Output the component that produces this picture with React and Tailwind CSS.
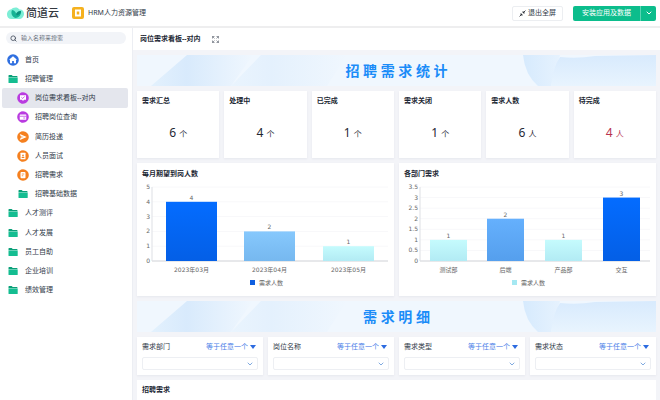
import React from "react";
import { ChevronDown, Search } from "lucide-react";

const DEJAVU = "'DejaVu Sans', 'Noto Sans CJK SC', sans-serif";

function Folder() {
  return (
    <svg viewBox="0 0 12 12" className="size-3" aria-hidden="true">
      <path d="M1.5 2.600q0-.6.6-.6h2.600l1 1.100h4.200q.6 0 .6.6v.6h-9z" fill="#0a9f78" />
      <path d="M1.500 4.600h9.200v4.800q0 .6-.6.6h-8q-.6 0-.6-.6z" fill="#14bd91" />
    </svg>
  );
}

function Disc({ color, children }) {
  return (
    <svg viewBox="0 0 24 24" className="size-3" aria-hidden="true">
      <circle cx="12" cy="12" r="11.6" fill={color} />
      {children}
    </svg>
  );
}

const icons = {
  home: (
    <Disc color="#2f6fe0">
      <path d="M12 4.500l8 7.200h-2V18.500h-4.200v-4.500h-3.600v4.500H6v-6.800H4z" fill="#fff" />
    </Disc>
  ),
  board: (
    <Disc color="#b93be0">
      <path d="M6 6.500h12v9h-4L12 18l-2-2.500H6z" fill="#fff" />
      <path d="M8.800 10.500l2.600 2.500 4-4.200" fill="none" stroke="#b93be0" strokeWidth="1.600" />
    </Disc>
  ),
  query: (
    <Disc color="#b93be0">
      <rect x="5.500" y="7" width="13" height="10.500" rx="1" fill="#fff" />
      <path d="M5.500 10.500h13M12.500 14h4" stroke="#b93be0" strokeWidth="1.500" />
    </Disc>
  ),
  send: (
    <Disc color="#f5801f">
      <path d="M5.500 6l14 6-14 6 2.200-5 6-1-6-1z" fill="#fff" />
    </Disc>
  ),
  badge: (
    <Disc color="#f5801f">
      <rect x="7" y="5.500" width="10" height="13" rx="1" fill="#fff" />
      <circle cx="12" cy="10.500" r="1.700" fill="#f5801f" />
      <path d="M9 16q0-3 3-3t3 3z" fill="#f5801f" />
    </Disc>
  ),
  clip: (
    <Disc color="#f5801f">
      <rect x="7" y="6" width="10" height="12.500" rx="2" fill="#fff" />
      <path d="M9.500 10h5M9.500 13.500h3" stroke="#f5801f" strokeWidth="1.500" />
    </Disc>
  ),
  folder: <Folder />,
};

const menu = [
  { label: "首页", icon: "home" },
  { label: "招聘管理", icon: "folder" },
  { label: "岗位需求看板--对内", icon: "board", child: true, active: true },
  { label: "招聘岗位查询", icon: "query", child: true },
  { label: "简历投递", icon: "send", child: true },
  { label: "人员面试", icon: "badge", child: true },
  { label: "招聘需求", icon: "clip", child: true },
  { label: "招聘基础数据", icon: "folder", child: true },
  { label: "人才测评", icon: "folder" },
  { label: "人才发展", icon: "folder" },
  { label: "员工自助", icon: "folder" },
  { label: "企业培训", icon: "folder" },
  { label: "绩效管理", icon: "folder" },
];

const stats = [
  { label: "需求汇总", value: 6, unit: "个" },
  { label: "处理中", value: 4, unit: "个" },
  { label: "已完成", value: 1, unit: "个" },
  { label: "需求关闭", value: 1, unit: "个" },
  { label: "需求人数", value: 6, unit: "人" },
  { label: "待完成", value: 4, unit: "人", alert: true },
];

function Header() {
  return (
    <header className="flex h-7 shrink-0 items-center border-b-2 border-[#eeeeef] bg-white pr-1 pl-[7px]">
      <svg viewBox="0 0 34 26" className="mr-0.5 h-[13px] w-[17px]" aria-hidden="true">
        <path d="M8 5C12 0 21-1 25 5c7-1 11 7 8 13-2 5-6 6-10 6H9C3 24 0 20 0 15S3 5 8 5z" fill="#7deed6" />
        <path d="M17 22C10 20 7 12 10 6c5 1 8 4 8 8 2-4 5-6 10-6 1 7-3 13-11 14z" fill="#14b394" />
        <path d="M18 14c2-4 5-6 10-6 0 4-3 7-8 9z" fill="#0b8f7c" />
      </svg>
      <span className="text-[11px] leading-4 font-medium text-[#33383f]">简道云</span>
      <svg viewBox="0 0 24 24" className="mr-1 ml-[13px] size-3" aria-hidden="true">
        <rect width="24" height="24" rx="4" fill="#f5b11e" />
        <path d="M6 5h12v14H6z" fill="#fff" />
        <rect x="9.500" y="9" width="5" height="6" fill="#f5b11e" />
      </svg>
      <h1 className="text-[7px]">HRM人力资源管理</h1>
      <button className="mr-2.5 ml-auto flex h-[15px] items-center gap-0.5 rounded-xs border border-[#eceef1] px-1.5 text-[7px]">
        <svg viewBox="0 0 12 12" className="size-[7px]" aria-hidden="true">
          <path d="M11 1L7 5M7 2v3h3M1 11l4-4M2 7h3v3" fill="none" stroke="#20252d" strokeWidth="1.500" />
        </svg>
        退出全屏
      </button>
      <div className="flex h-[15px] overflow-hidden rounded-xs bg-[#0cbd8c] text-white">
        <button className="px-[9px] text-[7px]">安装应用及数据</button>
        <button aria-label="更多" className="flex w-4 items-center justify-center border-l border-[#5ad4b3]">
          <ChevronDown className="size-2" strokeWidth={3} />
        </button>
      </div>
    </header>
  );
}

function Sidebar() {
  return (
    <aside className="w-[132px] shrink-0 bg-white pt-1">
      <label className="mx-1.5 flex h-3 items-center gap-1 rounded-full bg-[#f2f4f8] pl-1">
        <Search className="size-[7px] shrink-0 text-[#4b5563]" strokeWidth={3} />
        <input
          type="search"
          aria-label="搜索"
          placeholder="输入名称来搜索"
          className="w-full min-w-0 bg-transparent text-[6px] outline-none placeholder:text-[#6b7380]"
        />
      </label>
      <nav className="mt-1.5 grid h-[250px] grid-rows-[repeat(13,minmax(0,1fr))] pr-1 pl-0.5">
        {menu.map((m) => (
          <a
            key={m.label}
            href="#"
            className={
              "flex items-center gap-1.5 rounded-xs " +
              (m.child ? "pl-[15px] " : "pl-[5px] ") +
              (m.active ? "bg-[#e4e6ed]" : "")
            }
          >
            {icons[m.icon]}
            <span>{m.label}</span>
          </a>
        ))}
      </nav>
    </aside>
  );
}

function Banner({ id, children }) {
  return (
    <div className="relative h-[31px] overflow-hidden bg-[#f0f7fe]">
      <svg viewBox="0 0 519 31" preserveAspectRatio="none" className="absolute inset-0 h-full w-full" aria-hidden="true">
        <defs>
          <linearGradient id={id + "l"} x1="0" x2="1">
            <stop offset="0" stopColor="#e3f1fd" />
            <stop offset=".35" stopColor="#d8eafc" />
            <stop offset="1" stopColor="#f0f7fe" />
          </linearGradient>
          <linearGradient id={id + "r"} x1="0" x2="1">
            <stop offset="0" stopColor="#d6eafd" />
            <stop offset="1" stopColor="#e6f2fe" />
          </linearGradient>
          <linearGradient id={id + "f"} x1="0" y1="0" x2="0" y2="1">
            <stop offset="0" stopColor="#d8eafd" />
            <stop offset="1" stopColor="#e8f4fe" />
          </linearGradient>
        </defs>
        <path d="M14 31L50 0H116L94 31z" fill={"url(#" + id + "l)"} />
        <path d="M94 31L124 0H210L190 31z" fill={"url(#" + id + "l)"} opacity=".5" />
        <path d="M386 0H423L414 31H401Q388 20 386 0z" fill={"url(#" + id + "r)"} />
        <path d="M423 2Q440 4 458 1L519 0V31H414Q416 12 423 2z" fill={"url(#" + id + "f)"} />
      </svg>
      <h2 className="relative text-center text-[14px] leading-[31px] font-bold text-[#1b8cf8]">{children}</h2>
    </div>
  );
}

function BarChart({ id, title, left, right, ticks, max, bars, barWidth, legend }) {
  const top = 8;
  const base = 82;
  const y = (v) => base - (v / max) * (base - top);
  return (
    <section className="bg-white pt-1.5 shadow-xs shadow-[#e6e8ee]">
      <h3 className="px-[5px] leading-[10px] font-bold text-[#1b2733]">{title}</h3>
      <svg viewBox="0 0 257 117" className="block w-full" fontFamily={DEJAVU} fontSize="6" fill="#666" role="img" aria-label={title}>
        <defs>
          {bars.map((b, i) => (
            <linearGradient key={i} id={id + i} x1="0" y1="0" x2="0" y2="1">
              <stop offset="0" stopColor={b.from} />
              <stop offset="1" stopColor={b.to} />
            </linearGradient>
          ))}
        </defs>
        {ticks.map((t) => (
          <g key={t}>
            <path d={"M" + left + " " + y(t) + "H" + right} stroke={t === 0 ? "#cfd1d6" : "#f8f8fa"} />
            <text x={left - 2} y={y(t) + 2} textAnchor="end">{t}</text>
          </g>
        ))}
        <path d={"M" + left + " " + top + "V" + base} stroke="#dddfe4" />
        {bars.map((b, i) => (
          <g key={b.name} textAnchor="middle">
            <rect x={b.x} y={y(b.value)} width={barWidth} height={base - y(b.value)} fill={"url(#" + id + i + ")"} />
            <text x={b.x + barWidth / 2} y={y(b.value) - 2}>{b.value}</text>
            <text x={b.x + barWidth / 2} y="93">{b.name}</text>
          </g>
        ))}
        <rect x="113" y="101" width="5" height="5" fill={legend} />
        <text x="122" y="106">需求人数</text>
      </svg>
    </section>
  );
}

function Filter({ label }) {
  return (
    <section className="bg-white p-[5px] shadow-xs shadow-[#e6e8ee]">
      <div className="flex h-2.5 items-center justify-between pr-0.5">
        <label htmlFor={label}>{label}</label>
        <span className="relative flex items-center">
          <select aria-label={label + "条件"} className="appearance-none bg-transparent pr-2 leading-[10px] text-[#4a7fe8] outline-none">
            <option>等于任意一个</option>
          </select>
          <svg viewBox="0 0 6 4" className="pointer-events-none absolute right-0 h-1 w-1.5" aria-hidden="true">
            <path d="M0 0h6L3 4z" fill="#2c6be0" />
          </svg>
        </span>
      </div>
      <div className="relative mt-[5px] flex items-center">
        <select id={label} className="h-[13px] w-full appearance-none rounded-xs border border-[#edeff3] bg-white px-1 outline-none">
          <option></option>
        </select>
        <ChevronDown className="pointer-events-none absolute right-1 size-2 text-[#3f7fd0]" />
      </div>
    </section>
  );
}

const cyan = { from: "#c5fbfd", to: "#b2ebf4" };
const blue = { from: "#046cff", to: "#045fe6" };

export default function App() {
  return (
    <div className="flex h-screen flex-col overflow-hidden bg-white font-['Noto_Sans','Noto_Sans_CJK_SC',sans-serif] text-[7px] leading-[10px] text-[#2f3a48]">
      <Header />
      <div className="flex min-h-0 flex-1">
        <Sidebar />
        <main className="min-w-0 flex-1 border-l border-[#eceef3] bg-[#f3f4f8]">
          <div className="flex h-[22px] items-center gap-3 bg-white pl-[7px]">
            <h2 className="font-bold text-[#1b2733]">岗位需求看板--对内</h2>
            <button aria-label="全屏">
              <svg viewBox="0 0 14 14" className="size-[7px]" aria-hidden="true">
                <path d="M1 5V1h4M1 1l4 4M13 5V1H9M13 1L9 5M1 9v4h4M1 13l4-4M13 9v4H9M13 13L9 9" fill="none" stroke="#59616d" strokeWidth="1.300" />
              </svg>
            </button>
          </div>
          <div className="flex flex-col gap-[5px] px-1 pt-[5px]">
            <Banner id="a">招 聘 需 求 统 计</Banner>
            <div className="grid grid-cols-6 gap-[5px]">
              {stats.map((s) => (
                <section key={s.label} className="h-[67px] bg-white px-[5px] pt-[5px] shadow-xs shadow-[#e6e8ee]">
                  <h3 className="font-bold text-[#1b2733]">{s.label}</h3>
                  <p className={"mt-[18px] text-center text-[12px] leading-[18px] " + (s.alert ? "text-[#b8324f]" : "text-[#1f2733]")}>
                    {s.value} <span className="text-[8px]">{s.unit}</span>
                  </p>
                </section>
              ))}
            </div>
            <div className="grid grid-cols-2 gap-[5px]">
              <BarChart
                id="month"
                title="每月期望到岗人数"
                left={15}
                right={251}
                max={5}
                ticks={[0, 1, 2, 3, 4, 5]}
                barWidth={51}
                legend="#0f5fe0"
                bars={[
                  { name: "2023年03月", value: 4, x: 29, ...blue },
                  { name: "2023年04月", value: 2, x: 107, from: "#86c8fd", to: "#76b8ef" },
                  { name: "2023年05月", value: 1, x: 186, ...cyan },
                ]}
              />
              <BarChart
                id="dept"
                title="各部门需求"
                left={21}
                right={251}
                max={3.5}
                ticks={[0, 0.5, 1, 1.5, 2, 2.5, 3, 3.5]}
                barWidth={37}
                legend="#a5e8f2"
                bars={[
                  { name: "测试部", value: 1, x: 31, ...cyan },
                  { name: "后端", value: 2, x: 88, from: "#65b0fd", to: "#559fed" },
                  { name: "产品部", value: 1, x: 146, ...cyan },
                  { name: "交互", value: 3, x: 204, ...blue },
                ]}
              />
            </div>
            <Banner id="b">需 求 明 细</Banner>
            <div className="grid grid-cols-4 gap-[5px]">
              <Filter label="需求部门" />
              <Filter label="岗位名称" />
              <Filter label="需求类型" />
              <Filter label="需求状态" />
            </div>
            <section className="h-20 bg-white p-[5px]">
              <h3 className="font-bold text-[#1b2733]">招聘需求</h3>
            </section>
          </div>
        </main>
      </div>
    </div>
  );
}
